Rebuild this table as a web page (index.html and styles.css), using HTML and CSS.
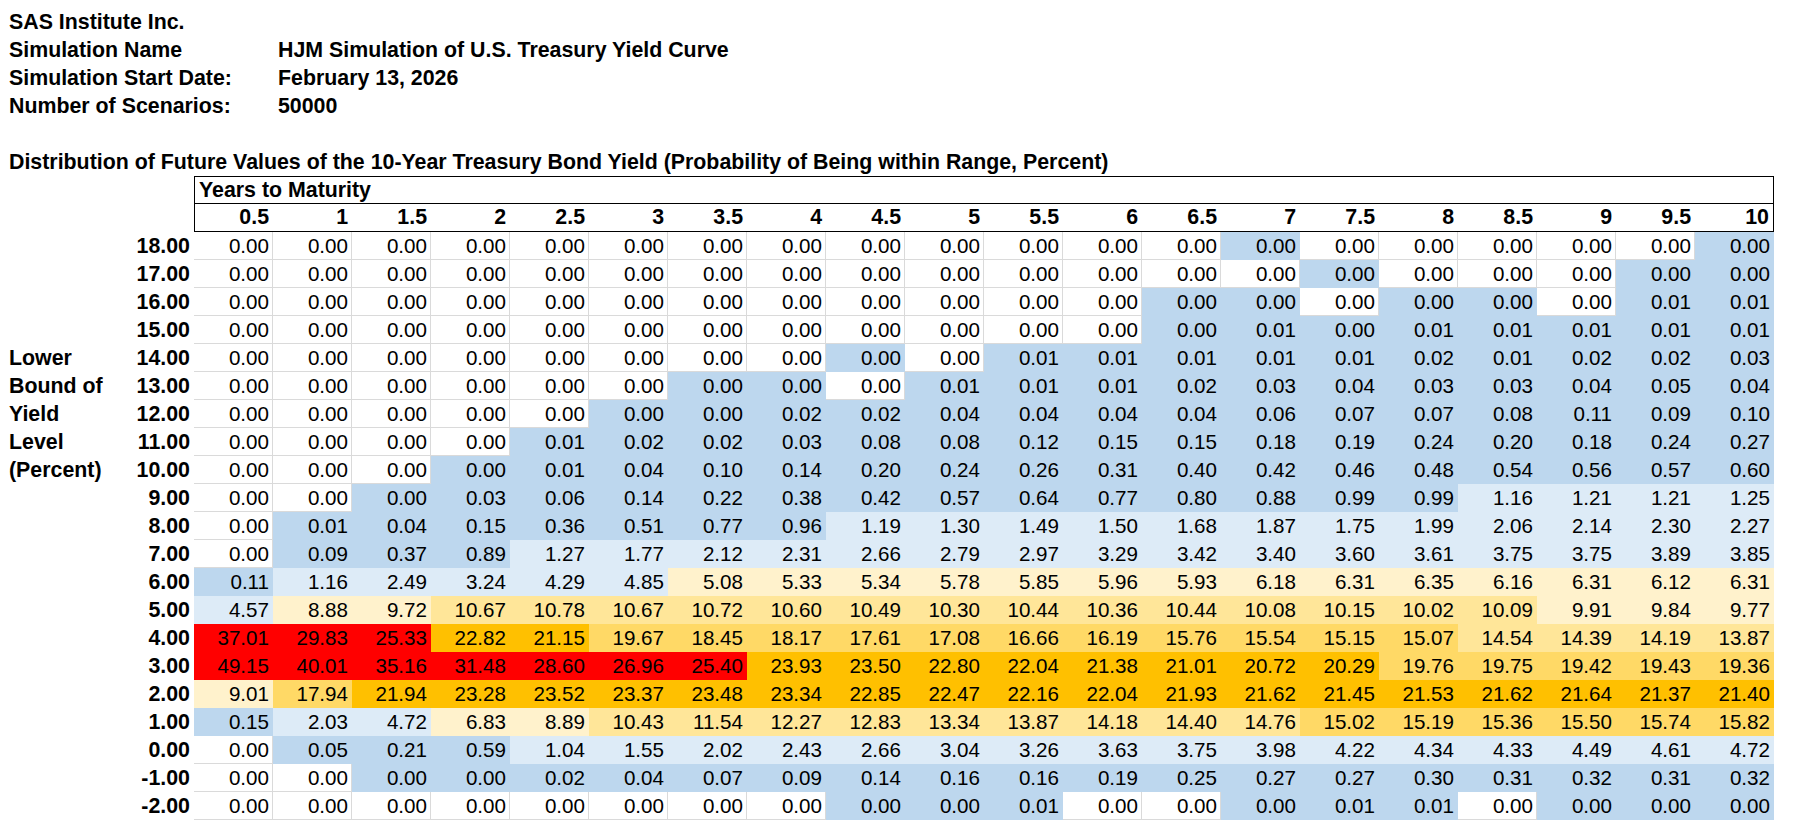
FILE: index.html
```html
<!DOCTYPE html>
<html>
<head>
<meta charset="utf-8">
<title>HJM Simulation</title>
<link rel="stylesheet" href="styles.css">
</head>
<body>
<div class="meta">
  <div class="k">SAS Institute Inc.</div><div></div>
  <div class="k">Simulation Name</div><div class="k">HJM Simulation of U.S. Treasury Yield Curve</div>
  <div class="k">Simulation Start Date:</div><div class="k">February 13, 2026</div>
  <div class="k">Number of Scenarios:</div><div class="k">50000</div>
</div>
<div class="blank"></div>
<div class="title">Distribution of Future Values of the 10-Year Treasury Bond Yield (Probability of Being within Range, Percent)</div>
<div class="grid">
  <div class="rl"></div>
  <div class="yrs">Years to Maturity</div>
  <div class="rl"></div>
  <div class="h first">0.5</div><div class="h">1</div><div class="h">1.5</div><div class="h">2</div><div class="h">2.5</div><div class="h">3</div><div class="h">3.5</div><div class="h">4</div><div class="h">4.5</div><div class="h">5</div><div class="h">5.5</div><div class="h">6</div><div class="h">6.5</div><div class="h">7</div><div class="h">7.5</div><div class="h">8</div><div class="h">8.5</div><div class="h">9</div><div class="h">9.5</div><div class="h last">10</div>

  <div class="rl"><span></span><span>18.00</span></div>
  <div class="w">0.00</div><div class="w">0.00</div><div class="w">0.00</div><div class="w">0.00</div><div class="w">0.00</div><div class="w">0.00</div><div class="w">0.00</div><div class="w">0.00</div><div class="w">0.00</div><div class="w">0.00</div><div class="w">0.00</div><div class="w">0.00</div><div class="w">0.00</div><div class="b">0.00</div><div class="w">0.00</div><div class="w">0.00</div><div class="w">0.00</div><div class="w">0.00</div><div class="w">0.00</div><div class="b">0.00</div>

  <div class="rl"><span></span><span>17.00</span></div>
  <div class="w">0.00</div><div class="w">0.00</div><div class="w">0.00</div><div class="w">0.00</div><div class="w">0.00</div><div class="w">0.00</div><div class="w">0.00</div><div class="w">0.00</div><div class="w">0.00</div><div class="w">0.00</div><div class="w">0.00</div><div class="w">0.00</div><div class="w">0.00</div><div class="w">0.00</div><div class="b">0.00</div><div class="w">0.00</div><div class="w">0.00</div><div class="w">0.00</div><div class="b">0.00</div><div class="b">0.00</div>

  <div class="rl"><span></span><span>16.00</span></div>
  <div class="w">0.00</div><div class="w">0.00</div><div class="w">0.00</div><div class="w">0.00</div><div class="w">0.00</div><div class="w">0.00</div><div class="w">0.00</div><div class="w">0.00</div><div class="w">0.00</div><div class="w">0.00</div><div class="w">0.00</div><div class="w">0.00</div><div class="b">0.00</div><div class="b">0.00</div><div class="w">0.00</div><div class="b">0.00</div><div class="b">0.00</div><div class="w">0.00</div><div class="b">0.01</div><div class="b">0.01</div>

  <div class="rl"><span></span><span>15.00</span></div>
  <div class="w">0.00</div><div class="w">0.00</div><div class="w">0.00</div><div class="w">0.00</div><div class="w">0.00</div><div class="w">0.00</div><div class="w">0.00</div><div class="w">0.00</div><div class="w">0.00</div><div class="w">0.00</div><div class="w">0.00</div><div class="w">0.00</div><div class="b">0.00</div><div class="b">0.01</div><div class="b">0.00</div><div class="b">0.01</div><div class="b">0.01</div><div class="b">0.01</div><div class="b">0.01</div><div class="b">0.01</div>

  <div class="rl"><span>Lower</span><span>14.00</span></div>
  <div class="w">0.00</div><div class="w">0.00</div><div class="w">0.00</div><div class="w">0.00</div><div class="w">0.00</div><div class="w">0.00</div><div class="w">0.00</div><div class="w">0.00</div><div class="b">0.00</div><div class="w">0.00</div><div class="b">0.01</div><div class="b">0.01</div><div class="b">0.01</div><div class="b">0.01</div><div class="b">0.01</div><div class="b">0.02</div><div class="b">0.01</div><div class="b">0.02</div><div class="b">0.02</div><div class="b">0.03</div>

  <div class="rl"><span>Bound of</span><span>13.00</span></div>
  <div class="w">0.00</div><div class="w">0.00</div><div class="w">0.00</div><div class="w">0.00</div><div class="w">0.00</div><div class="w">0.00</div><div class="b">0.00</div><div class="b">0.00</div><div class="w">0.00</div><div class="b">0.01</div><div class="b">0.01</div><div class="b">0.01</div><div class="b">0.02</div><div class="b">0.03</div><div class="b">0.04</div><div class="b">0.03</div><div class="b">0.03</div><div class="b">0.04</div><div class="b">0.05</div><div class="b">0.04</div>

  <div class="rl"><span>Yield</span><span>12.00</span></div>
  <div class="w">0.00</div><div class="w">0.00</div><div class="w">0.00</div><div class="w">0.00</div><div class="w">0.00</div><div class="b">0.00</div><div class="b">0.00</div><div class="b">0.02</div><div class="b">0.02</div><div class="b">0.04</div><div class="b">0.04</div><div class="b">0.04</div><div class="b">0.04</div><div class="b">0.06</div><div class="b">0.07</div><div class="b">0.07</div><div class="b">0.08</div><div class="b">0.11</div><div class="b">0.09</div><div class="b">0.10</div>

  <div class="rl"><span>Level</span><span>11.00</span></div>
  <div class="w">0.00</div><div class="w">0.00</div><div class="w">0.00</div><div class="w">0.00</div><div class="b">0.01</div><div class="b">0.02</div><div class="b">0.02</div><div class="b">0.03</div><div class="b">0.08</div><div class="b">0.08</div><div class="b">0.12</div><div class="b">0.15</div><div class="b">0.15</div><div class="b">0.18</div><div class="b">0.19</div><div class="b">0.24</div><div class="b">0.20</div><div class="b">0.18</div><div class="b">0.24</div><div class="b">0.27</div>

  <div class="rl"><span>(Percent)</span><span>10.00</span></div>
  <div class="w">0.00</div><div class="w">0.00</div><div class="w">0.00</div><div class="b">0.00</div><div class="b">0.01</div><div class="b">0.04</div><div class="b">0.10</div><div class="b">0.14</div><div class="b">0.20</div><div class="b">0.24</div><div class="b">0.26</div><div class="b">0.31</div><div class="b">0.40</div><div class="b">0.42</div><div class="b">0.46</div><div class="b">0.48</div><div class="b">0.54</div><div class="b">0.56</div><div class="b">0.57</div><div class="b">0.60</div>

  <div class="rl"><span></span><span>9.00</span></div>
  <div class="w">0.00</div><div class="w">0.00</div><div class="b">0.00</div><div class="b">0.03</div><div class="b">0.06</div><div class="b">0.14</div><div class="b">0.22</div><div class="b">0.38</div><div class="b">0.42</div><div class="b">0.57</div><div class="b">0.64</div><div class="b">0.77</div><div class="b">0.80</div><div class="b">0.88</div><div class="b">0.99</div><div class="b">0.99</div><div class="l">1.16</div><div class="l">1.21</div><div class="l">1.21</div><div class="l">1.25</div>

  <div class="rl"><span></span><span>8.00</span></div>
  <div class="w">0.00</div><div class="b">0.01</div><div class="b">0.04</div><div class="b">0.15</div><div class="b">0.36</div><div class="b">0.51</div><div class="b">0.77</div><div class="b">0.96</div><div class="l">1.19</div><div class="l">1.30</div><div class="l">1.49</div><div class="l">1.50</div><div class="l">1.68</div><div class="l">1.87</div><div class="l">1.75</div><div class="l">1.99</div><div class="l">2.06</div><div class="l">2.14</div><div class="l">2.30</div><div class="l">2.27</div>

  <div class="rl"><span></span><span>7.00</span></div>
  <div class="w">0.00</div><div class="b">0.09</div><div class="b">0.37</div><div class="b">0.89</div><div class="l">1.27</div><div class="l">1.77</div><div class="l">2.12</div><div class="l">2.31</div><div class="l">2.66</div><div class="l">2.79</div><div class="l">2.97</div><div class="l">3.29</div><div class="l">3.42</div><div class="l">3.40</div><div class="l">3.60</div><div class="l">3.61</div><div class="l">3.75</div><div class="l">3.75</div><div class="l">3.89</div><div class="l">3.85</div>

  <div class="rl"><span></span><span>6.00</span></div>
  <div class="b">0.11</div><div class="l">1.16</div><div class="l">2.49</div><div class="l">3.24</div><div class="l">4.29</div><div class="l">4.85</div><div class="y1">5.08</div><div class="y1">5.33</div><div class="y1">5.34</div><div class="y1">5.78</div><div class="y1">5.85</div><div class="y1">5.96</div><div class="y1">5.93</div><div class="y1">6.18</div><div class="y1">6.31</div><div class="y1">6.35</div><div class="y1">6.16</div><div class="y1">6.31</div><div class="y1">6.12</div><div class="y1">6.31</div>

  <div class="rl"><span></span><span>5.00</span></div>
  <div class="l">4.57</div><div class="y1">8.88</div><div class="y1">9.72</div><div class="y2">10.67</div><div class="y2">10.78</div><div class="y2">10.67</div><div class="y2">10.72</div><div class="y2">10.60</div><div class="y2">10.49</div><div class="y2">10.30</div><div class="y2">10.44</div><div class="y2">10.36</div><div class="y2">10.44</div><div class="y2">10.08</div><div class="y2">10.15</div><div class="y2">10.02</div><div class="y2">10.09</div><div class="y1">9.91</div><div class="y1">9.84</div><div class="y1">9.77</div>

  <div class="rl"><span></span><span>4.00</span></div>
  <div class="r">37.01</div><div class="r">29.83</div><div class="r">25.33</div><div class="o">22.82</div><div class="o">21.15</div><div class="y3">19.67</div><div class="y3">18.45</div><div class="y3">18.17</div><div class="y3">17.61</div><div class="y3">17.08</div><div class="y3">16.66</div><div class="y3">16.19</div><div class="y3">15.76</div><div class="y3">15.54</div><div class="y3">15.15</div><div class="y3">15.07</div><div class="y2">14.54</div><div class="y2">14.39</div><div class="y2">14.19</div><div class="y2">13.87</div>

  <div class="rl"><span></span><span>3.00</span></div>
  <div class="r">49.15</div><div class="r">40.01</div><div class="r">35.16</div><div class="r">31.48</div><div class="r">28.60</div><div class="r">26.96</div><div class="r">25.40</div><div class="o">23.93</div><div class="o">23.50</div><div class="o">22.80</div><div class="o">22.04</div><div class="o">21.38</div><div class="o">21.01</div><div class="o">20.72</div><div class="o">20.29</div><div class="y3">19.76</div><div class="y3">19.75</div><div class="y3">19.42</div><div class="y3">19.43</div><div class="y3">19.36</div>

  <div class="rl"><span></span><span>2.00</span></div>
  <div class="y1">9.01</div><div class="y3">17.94</div><div class="o">21.94</div><div class="o">23.28</div><div class="o">23.52</div><div class="o">23.37</div><div class="o">23.48</div><div class="o">23.34</div><div class="o">22.85</div><div class="o">22.47</div><div class="o">22.16</div><div class="o">22.04</div><div class="o">21.93</div><div class="o">21.62</div><div class="o">21.45</div><div class="o">21.53</div><div class="o">21.62</div><div class="o">21.64</div><div class="o">21.37</div><div class="o">21.40</div>

  <div class="rl"><span></span><span>1.00</span></div>
  <div class="b">0.15</div><div class="l">2.03</div><div class="l">4.72</div><div class="y1">6.83</div><div class="y1">8.89</div><div class="y2">10.43</div><div class="y2">11.54</div><div class="y2">12.27</div><div class="y2">12.83</div><div class="y2">13.34</div><div class="y2">13.87</div><div class="y2">14.18</div><div class="y2">14.40</div><div class="y2">14.76</div><div class="y3">15.02</div><div class="y3">15.19</div><div class="y3">15.36</div><div class="y3">15.50</div><div class="y3">15.74</div><div class="y3">15.82</div>

  <div class="rl"><span></span><span>0.00</span></div>
  <div class="w">0.00</div><div class="b">0.05</div><div class="b">0.21</div><div class="b">0.59</div><div class="l">1.04</div><div class="l">1.55</div><div class="l">2.02</div><div class="l">2.43</div><div class="l">2.66</div><div class="l">3.04</div><div class="l">3.26</div><div class="l">3.63</div><div class="l">3.75</div><div class="l">3.98</div><div class="l">4.22</div><div class="l">4.34</div><div class="l">4.33</div><div class="l">4.49</div><div class="l">4.61</div><div class="l">4.72</div>

  <div class="rl"><span></span><span>-1.00</span></div>
  <div class="w">0.00</div><div class="w">0.00</div><div class="b">0.00</div><div class="b">0.00</div><div class="b">0.02</div><div class="b">0.04</div><div class="b">0.07</div><div class="b">0.09</div><div class="b">0.14</div><div class="b">0.16</div><div class="b">0.16</div><div class="b">0.19</div><div class="b">0.25</div><div class="b">0.27</div><div class="b">0.27</div><div class="b">0.30</div><div class="b">0.31</div><div class="b">0.32</div><div class="b">0.31</div><div class="b">0.32</div>

  <div class="rl"><span></span><span>-2.00</span></div>
  <div class="w">0.00</div><div class="w">0.00</div><div class="w">0.00</div><div class="w">0.00</div><div class="w">0.00</div><div class="w">0.00</div><div class="w">0.00</div><div class="w">0.00</div><div class="b">0.00</div><div class="b">0.00</div><div class="b">0.01</div><div class="w">0.00</div><div class="w">0.00</div><div class="b">0.00</div><div class="b">0.01</div><div class="b">0.01</div><div class="w">0.00</div><div class="b">0.00</div><div class="b">0.00</div><div class="b">0.00</div>
</div>
</body>
</html>
```

FILE: styles.css
```css
html, body {
  background: #ffffff;
}
body {
  margin: 8px;
  font-family: "Liberation Sans", Arial, sans-serif;
  font-size: 21.35px;
  line-height: 28px;
  color: #000000;
}
.meta {
  display: grid;
  grid-template-columns: 269px auto;
  grid-auto-rows: 28px;
  padding-left: 1px;
}
.k {
  font-weight: bold;
  white-space: nowrap;
}
.blank {
  height: 28px;
}
.title {
  height: 28px;
  padding-left: 1px;
  font-weight: bold;
  white-space: nowrap;
}
.grid {
  display: grid;
  grid-template-columns: 186px repeat(20, 79px);
  grid-auto-rows: 28px;
}
.grid > div {
  box-sizing: border-box;
  white-space: nowrap;
}
.rl {
  display: flex;
  justify-content: space-between;
  padding-left: 1px;
  padding-right: 4px;
  font-weight: bold;
}
.yrs {
  grid-column: 2 / span 20;
  border: 1px solid #000000;
  padding-left: 4px;
  font-weight: bold;
  line-height: 27px;
}
.h {
  text-align: right;
  padding-right: 4px;
  font-weight: bold;
  border-bottom: 1px solid #000000;
  line-height: 27px;
}
.h.first {
  border-left: 1px solid #000000;
}
.h.last {
  border-right: 1px solid #000000;
}
.w, .b, .l, .y1, .y2, .y3, .o, .r {
  text-align: right;
  padding-right: 4px;
  font-size: 20.6px;
}
.w {
  background: #ffffff;
  box-shadow: inset -1px -1px 0 #dadada;
}
.b { background: #bdd7ee; }
.l { background: #ddebf7; }
.y1 { background: #fff2cc; }
.y2 { background: #ffe699; }
.y3 { background: #ffd966; }
.o { background: #ffc000; }
.r { background: #ff0000; }
```
